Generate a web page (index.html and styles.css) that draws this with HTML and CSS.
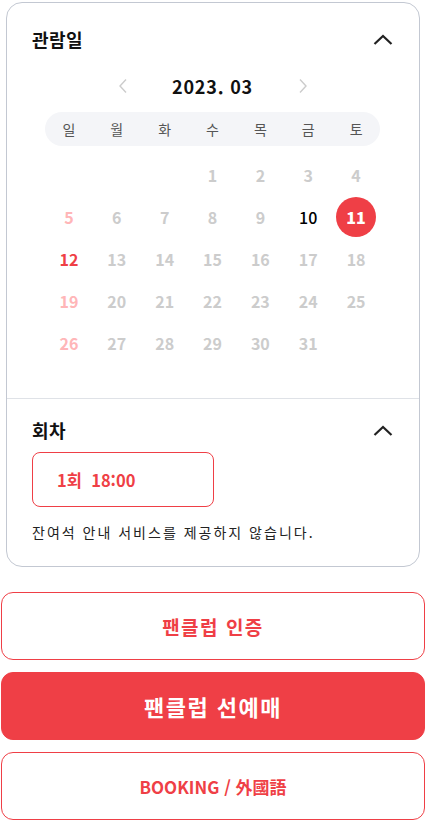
FILE: index.html
```html
<!DOCTYPE html>
<html lang="ko">
<head>
    <meta charset="UTF-8">
    <title>관람일 선택</title>
    <link rel="stylesheet" href="styles.css">
</head>
<body>
<div class="page">
    <div class="card">
        <div class="section">
            <div class="section-head">
                <h2>관람일</h2>
                <svg class="toggle" width="20" height="12" viewBox="0 0 20 12"><path d="M1.5 10 L10 2 L18.5 10" fill="none" stroke="#222" stroke-width="2.2"/></svg>
            </div>

            <div class="month-nav">
                <svg class="arrow" width="10" height="16" viewBox="0 0 10 16"><path d="M8 1.5 L2 8 L8 14.5" fill="none" stroke="#ccc" stroke-width="1.4"/></svg>
                <span class="month">2023. 03</span>
                <svg class="arrow" width="10" height="16" viewBox="0 0 10 16"><path d="M2 1.5 L8 8 L2 14.5" fill="none" stroke="#ccc" stroke-width="1.4"/></svg>
            </div>

            <div class="weekdays">
                <span>일</span><span>월</span><span>화</span><span>수</span><span>목</span><span>금</span><span>토</span>
            </div>

            <div class="days">
                <span></span><span></span><span></span>
                <span class="off">1</span><span class="off">2</span><span class="off">3</span><span class="off">4</span>
                <span class="sun-off">5</span><span class="off">6</span><span class="off">7</span><span class="off">8</span><span class="off">9</span><span class="open">10</span><span class="selected"><b>11</b></span>
                <span class="sun">12</span><span class="off">13</span><span class="off">14</span><span class="off">15</span><span class="off">16</span><span class="off">17</span><span class="off">18</span>
                <span class="sun-off">19</span><span class="off">20</span><span class="off">21</span><span class="off">22</span><span class="off">23</span><span class="off">24</span><span class="off">25</span>
                <span class="sun-off">26</span><span class="off">27</span><span class="off">28</span><span class="off">29</span><span class="off">30</span><span class="off">31</span><span></span>
            </div>
        </div>

        <div class="section round">
            <div class="section-head">
                <h2>회차</h2>
                <svg class="toggle" width="20" height="12" viewBox="0 0 20 12"><path d="M1.5 10 L10 2 L18.5 10" fill="none" stroke="#222" stroke-width="2.2"/></svg>
            </div>
            <button class="time">1회&nbsp; 18:00</button>
            <p class="notice">잔여석 안내 서비스를 제공하지 않습니다.</p>
        </div>
    </div>

    <div class="actions">
        <button class="btn outline">팬클럽 인증</button>
        <button class="btn solid">팬클럽 선예매</button>
        <button class="btn outline small">BOOKING / 外國語</button>
    </div>
</div>
</body>
</html>
```

FILE: styles.css
```css
html, body {
    margin: 0;
    background: #ffffff;
}

body {
    font-family: "Noto Sans CJK KR", "Noto Sans", sans-serif;
    color: #111111;
}

.page {
    width: 424px;
    padding: 2px 0 0 1px;
}

.card {
    width: 414px;
    margin-left: 5px;
    box-sizing: border-box;
    border: 1px solid #c3c8d2;
    border-radius: 16px;
}

.section {
    padding: 22px 26px 34px 25px;
}

.section.round {
    padding-top: 17px;
    padding-bottom: 25px;
    border-top: 1px solid #dfe2e7;
}

.section-head {
    display: flex;
    justify-content: space-between;
    align-items: center;
    height: 28px;
}

.section-head h2 {
    margin: 0;
    font-size: 18px;
    font-weight: 700;
    letter-spacing: 0.5px;
}

.toggle {
    display: block;
    margin-top: 2px;
}

.month-nav {
    display: flex;
    justify-content: center;
    align-items: center;
    gap: 40px;
    height: 28px;
    margin-top: 19px;
}

.month {
    width: 90px;
    text-align: center;
    font-size: 18px;
    font-weight: 700;
    letter-spacing: 0.8px;
    color: #111111;
}

.weekdays,
.days {
    display: grid;
    grid-template-columns: repeat(7, 1fr);
    width: 335px;
    margin: 0 auto;
}

.weekdays {
    height: 34px;
    margin-top: 12px;
    align-items: center;
    border-radius: 17px;
    background: #f4f5f8;
}

.weekdays span {
    text-align: center;
    font-size: 14px;
    color: #555555;
}

.days {
    margin-top: 8px;
    grid-auto-rows: 42px;
}

.days span {
    display: flex;
    justify-content: center;
    align-items: center;
    font-size: 16px;
    font-weight: 700;
}

.days .off {
    color: #cccccc;
}

.days .sun-off {
    color: #ffb6b8;
}

.days .sun {
    color: #ef3f46;
}

.days .open {
    color: #000000;
    font-weight: 500;
}

.days .selected b {
    display: flex;
    justify-content: center;
    align-items: center;
    width: 40px;
    height: 40px;
    border-radius: 50%;
    background: #ef3f46;
    color: #ffffff;
}

.time {
    display: block;
    width: 182px;
    height: 55px;
    margin-top: 8px;
    padding: 0 0 0 24px;
    box-sizing: border-box;
    border: 1px solid #ef3f46;
    border-radius: 8px;
    background: #ffffff;
    text-align: left;
    font-family: inherit;
    font-size: 16.5px;
    font-weight: 700;
    color: #ef3f46;
}

.notice {
    margin: 16px 0 0;
    line-height: 18px;
    font-size: 14px;
    letter-spacing: 2px;
    color: #222222;
}

.actions {
    display: flex;
    flex-direction: column;
    gap: 12px;
    margin-top: 25px;
}

.btn {
    height: 68px;
    box-sizing: border-box;
    border: 1px solid #ef3f46;
    border-radius: 12px;
    font-family: inherit;
    font-size: 19px;
    font-weight: 700;
    letter-spacing: 1.5px;
}

.btn.outline {
    background: #ffffff;
    color: #ef3f46;
}

.btn.solid {
    background: #ef3f46;
    color: #ffffff;
    font-size: 22px;
}

.btn.small {
    font-size: 17px;
    letter-spacing: 0;
}
```
